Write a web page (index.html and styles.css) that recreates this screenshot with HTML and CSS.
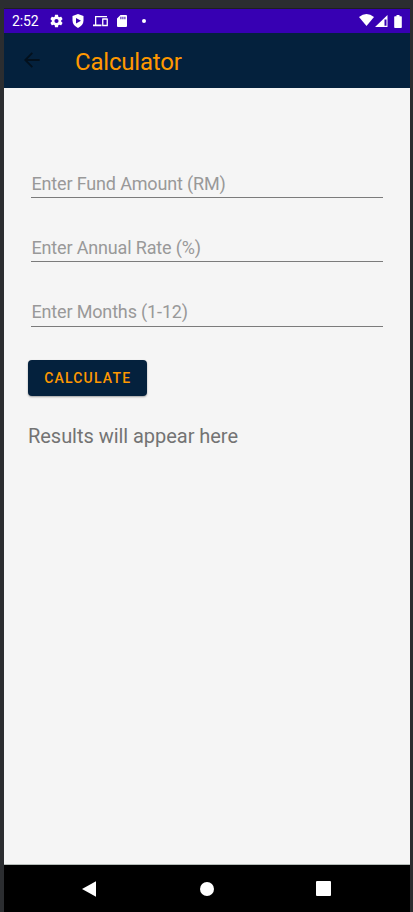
FILE: index.html
```html
<!DOCTYPE html>
<html lang="en">
<head>
<meta charset="utf-8">
<title>Calculator</title>
<link rel="stylesheet" href="styles.css">
</head>
<body>
<div class="device">
  <div class="status">
    <span class="clock">2:52</span>
    <svg class="gear" width="13" height="14" viewBox="2 2 20 20"><path fill-rule="evenodd" d="M19.14 12.94c.04-.3.06-.61.06-.94s-.02-.64-.07-.94l2.03-1.58a.49.49 0 0 0 .12-.61l-1.92-3.32a.49.49 0 0 0-.59-.22l-2.39.96a7 7 0 0 0-1.62-.94l-.36-2.54A.48.48 0 0 0 13.92 2.4h-3.84a.48.48 0 0 0-.47.41l-.36 2.54a7 7 0 0 0-1.62.94l-2.39-.96a.48.48 0 0 0-.59.22L2.73 8.87a.48.48 0 0 0 .12.61l2.03 1.58a6 6 0 0 0 0 1.88l-2.03 1.58a.49.49 0 0 0-.12.61l1.92 3.32c.12.22.37.29.59.22l2.39-.96c.5.38 1.03.7 1.62.94l.36 2.54c.05.24.24.41.47.41h3.84c.24 0 .44-.17.47-.41l.36-2.54a7 7 0 0 0 1.62-.94l2.39.96c.22.08.47 0 .59-.22l1.92-3.32a.48.48 0 0 0-.12-.61zM12 15.2a3.2 3.2 0 1 1 0-6.4 3.2 3.2 0 0 1 0 6.4z"/></svg>
    <svg class="shield" width="12" height="14" viewBox="0 0 12 14"><path fill-rule="evenodd" d="M6 0 11.500 2v4.600c0 3.400-2.300 6-5.500 7.300C2.800 12.600.5 10 .5 6.600V2zM4 3.900v5.700l5-2.850z"/></svg>
    <svg class="devices" width="15" height="12" viewBox="0 0 15 12"><path d="M2 1h12v1.300H3.300v7.200H8.500V11.300H0V9.500h2zM9.700 3.200h4.600q.6 0 .6.600v6.900q0 .6-.6.600H9.700q-.6 0-.6-.6V3.800q0-.6.600-.6zm.7 1.500v5h3.200v-5z" fill-rule="evenodd"/></svg>
    <svg class="card" width="10" height="12" viewBox="0 0 10 12"><path fill-rule="evenodd" d="M3.500 0H9q1 0 1 1v10q0 1-1 1H1q-1 0-1-1V3.500zM3.400 1.800v2.500h1V1.800zm2 0v2.500h1V1.800zm2 0v2.500h1V1.800z"/></svg>
    <span class="dot"></span>
    <svg class="wifi" width="15" height="12" viewBox="0 0 15 12"><path d="M0 3Q7.500-3 15 3L7.500 12z"/></svg>
    <svg class="signal" width="13" height="12" viewBox="0 0 13 12"><path fill-rule="evenodd" d="M12.500 0v12H0zM9.500 4.600v6.200h2V4.600z"/></svg>
    <svg class="battery" width="8" height="13" viewBox="0 0 8 13"><path d="M2.500 0h3v1.200H7q.8 0 .8.800v10.200q0 .8-.8.800H1q-.8 0-.8-.8V2q0-.8.800-.8h1.500z"/></svg>
  </div>
  <header class="appbar">
    <svg class="back" width="16" height="16" viewBox="0 0 16 16"><path d="M15.700 8H1.300M8.300.8 1.200 8l7.100 7.200"/></svg>
    <h1 class="title">Calculator</h1>
  </header>
  <main class="content">
    <input class="field" type="text" placeholder="Enter Fund Amount (RM)">
    <input class="field" type="text" placeholder="Enter Annual Rate (%)">
    <input class="field" type="text" placeholder="Enter Months (1-12)">
    <button class="calculate" type="button">CALCULATE</button>
    <p class="results">Results will appear here</p>
  </main>
  <nav class="navbar">
    <svg class="nav-back" width="15" height="16" viewBox="0 0 15 16"><path d="M14 .2v15.600L0 8z"/></svg>
    <span class="nav-home"></span>
    <span class="nav-recent"></span>
  </nav>
</div>
</body>
</html>
```
FILE: styles.css
```css
* {
  box-sizing: border-box;
}

body {
  margin: 0;
  height: 912px;
  padding: 9px 3px 0 4px;
  overflow: hidden;
  background: #2b2d30;
  font-family: Roboto, sans-serif;
}

.device {
  display: flex;
  flex-direction: column;
  height: 903px;
  background: #f5f5f5;
  box-shadow: 0 -1px #1e1f22;
}

.status {
  display: flex;
  align-items: center;
  flex: 0 0 24px;
  padding: 0 8px;
  background: #3700b3;
}

.status svg {
  flex: none;
  fill: #fff;
}

.clock {
  width: 38px;
  color: #fff;
  font-size: 14px;
  line-height: 24px;
  letter-spacing: -0.1px;
}

.shield {
  margin-left: 9px;
}

.devices {
  margin-left: 9px;
}

.card {
  margin-left: 9px;
}

.dot {
  width: 4px;
  height: 4px;
  margin-left: 15px;
  border-radius: 50%;
  background: #fff;
}

.wifi {
  margin: 0 0 2px auto;
}

.signal {
  margin: 0 0 0 1px;
}

.battery {
  margin-left: 6px;
}

.appbar {
  display: flex;
  align-items: center;
  flex: 0 0 55px;
  padding-left: 20px;
  background: #04213d;
}

.back {
  margin-top: -1px;
  fill: none;
  stroke: #03101d;
  stroke-width: 1.8;
}

.title {
  margin: 2px 0 0 35px;
  color: #ff9800;
  font-size: 24px;
  font-weight: 400;
  line-height: 30px;
  letter-spacing: -0.2px;
}

.content {
  display: flex;
  flex-direction: column;
  align-items: flex-start;
  flex: 1;
  padding: 78px 28px 0 24px;
  border-bottom: 1px solid #b5bcb8;
}

.field {
  width: 351.500px;
  height: 32px;
  margin: 0 0 32.3px 3.4px;
  padding: 3px 0 0;
  border: 0;
  border-bottom: 1px solid #7b7b7b;
  border-radius: 0;
  outline: 0;
  background: transparent;
  color: #212121;
  font: 18px Roboto, sans-serif;
  letter-spacing: -0.15px;
}

.field::placeholder {
  color: #999;
  opacity: 1;
}

.calculate {
  width: 118.500px;
  height: 36px;
  margin-top: 1px;
  padding: 0 0 0 1px;
  border: 0;
  border-radius: 4px;
  background: #04213d;
  box-shadow: 0 1px 2px rgba(0, 0, 0, 0.35);
  color: #ff9800;
  font: 500 14px Roboto, sans-serif;
  letter-spacing: 1.2px;
}

.results {
  margin: 28px 0 0;
  color: #737373;
  font-size: 20px;
  line-height: 24px;
  letter-spacing: -0.04px;
}

.navbar {
  display: flex;
  align-items: center;
  flex: 0 0 47px;
  padding-left: 78px;
  background: #000;
}

.nav-back {
  fill: #fff;
}

.nav-home {
  width: 14px;
  height: 14px;
  margin-left: 103px;
  border-radius: 50%;
  background: #fff;
}

.nav-recent {
  width: 15px;
  height: 15px;
  margin-left: 102px;
  border-radius: 1px;
  background: #fff;
}
```
